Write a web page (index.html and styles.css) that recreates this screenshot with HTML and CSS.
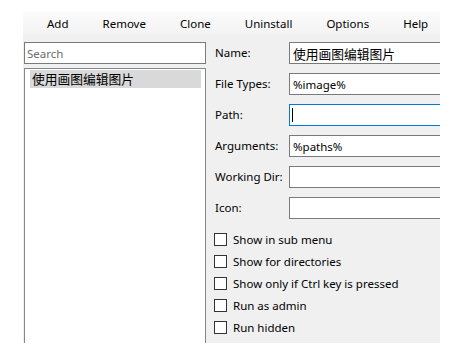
FILE: index.html
```
<!DOCTYPE html>
<html lang="zh-CN">

<head>
    <meta charset="UTF-8">
    <meta name="viewport" content="width=device-width, initial-scale=1.0">
    <title>Context Menu Editor</title>
    <link rel="stylesheet" href="styles.css">
</head>

<body>
    <div class="window">
        <div class="menu-bar">
            <span class="menu-item">Add</span>
            <span class="menu-item">Remove</span>
            <span class="menu-item">Clone</span>
            <span class="menu-item">Uninstall</span>
            <span class="menu-item">Options</span>
            <span class="menu-item">Help</span>
        </div>

        <div class="content">
            <div class="side">
                <input type="text" class="search" placeholder="Search">
                <div class="list">
                    <div class="list-item selected cjk">使用画图编辑图片</div>
                </div>
            </div>

            <div class="form">
                <div class="row">
                    <label for="name">Name:</label>
                    <div class="field"><input type="text" id="name" class="cjk" value="使用画图编辑图片"></div>
                </div>
                <div class="row">
                    <label for="fileTypes">File Types:</label>
                    <div class="field"><input type="text" id="fileTypes" value="%image%"></div>
                </div>
                <div class="row">
                    <label for="path">Path:</label>
                    <div class="field focused"><input type="text" id="path"><span class="caret"></span></div>
                </div>
                <div class="row">
                    <label for="arguments">Arguments:</label>
                    <div class="field"><input type="text" id="arguments" value="%paths%"></div>
                </div>
                <div class="row">
                    <label for="workingDir">Working Dir:</label>
                    <div class="field"><input type="text" id="workingDir"></div>
                </div>
                <div class="row">
                    <label for="icon">Icon:</label>
                    <div class="field"><input type="text" id="icon"></div>
                </div>

                <div class="checks">
                    <label class="check"><input type="checkbox"> Show in sub menu</label>
                    <label class="check"><input type="checkbox"> Show for directories</label>
                    <label class="check"><input type="checkbox"> Show only if Ctrl key is pressed</label>
                    <label class="check"><input type="checkbox"> Run as admin</label>
                    <label class="check"><input type="checkbox"> Run hidden</label>
                </div>
            </div>
        </div>
    </div>
</body>

</html>
```

FILE: styles.css
```
body {
    margin: 0;
    background-color: #ffffff;
    font-family: "Noto Sans", "Noto Sans CJK SC", sans-serif;
    font-size: 11.5px;
    color: #000000;
}

.window {
    margin: 12px 0 0 23px;
    width: 417px;
    height: 331px;
    background-color: #f0f0f0;
    overflow: hidden;
}

.menu-bar {
    display: flex;
    height: 24px;
    box-sizing: border-box;
    padding: 0 0 2px 7px;
    align-items: center;
    background: linear-gradient(#fbfbfb, #f2f2f2);
}

.menu-item {
    padding: 0 17px;
}

.content {
    display: flex;
    padding: 6px 0 0 1px;
    gap: 9px;
}

.side {
    display: flex;
    flex-direction: column;
    width: 182px;
    flex-shrink: 0;
}

.search {
    height: 22px;
    box-sizing: border-box;
    border: 1px solid #7a7a7a;
    padding: 0 2px;
    margin: 0 0 4px 0;
    font-family: inherit;
    font-size: 11.5px;
    outline: none;
}

.search::placeholder {
    color: #6d6d6d;
}

.list {
    height: 290px;
    background-color: #ffffff;
    border: 1px solid #828790;
    border-bottom: none;
    padding: 1px 4px 0 5px;
    box-sizing: border-box;
}

.list-item {
    height: 18px;
    line-height: 18px;
    padding-left: 2px;
}

.list-item.selected {
    background-color: #d9d9d9;
}

.form {
    flex: 1;
    display: flex;
    flex-direction: column;
}

.row {
    display: flex;
    align-items: center;
    height: 22px;
    margin-bottom: 9px;
}

.row label {
    width: 74px;
    flex-shrink: 0;
    padding-bottom: 1px;
}

.field {
    position: relative;
    width: 170px;
    flex-shrink: 0;
}

.field input {
    width: 100%;
    height: 22px;
    box-sizing: border-box;
    border: 1px solid #7a7a7a;
    padding: 0 3px;
    font-family: inherit;
    font-size: 11.5px;
    background-color: #ffffff;
    outline: none;
    caret-color: transparent;
}

.field input.cjk,
.list-item.cjk {
    font-size: 12.75px;
}

.field.focused input {
    border-color: #0078d7;
}

.caret {
    position: absolute;
    left: 3px;
    top: 4px;
    width: 1px;
    height: 14px;
    background-color: #000000;
}

.checks {
    display: flex;
    flex-direction: column;
}

.check {
    display: flex;
    align-items: center;
    height: 22px;
    gap: 6px;
}

.check input {
    appearance: none;
    width: 13px;
    height: 13px;
    margin: 0 0 0 -1px;
    border: 1px solid #333333;
    background-color: #ffffff;
    box-sizing: border-box;
}
```
